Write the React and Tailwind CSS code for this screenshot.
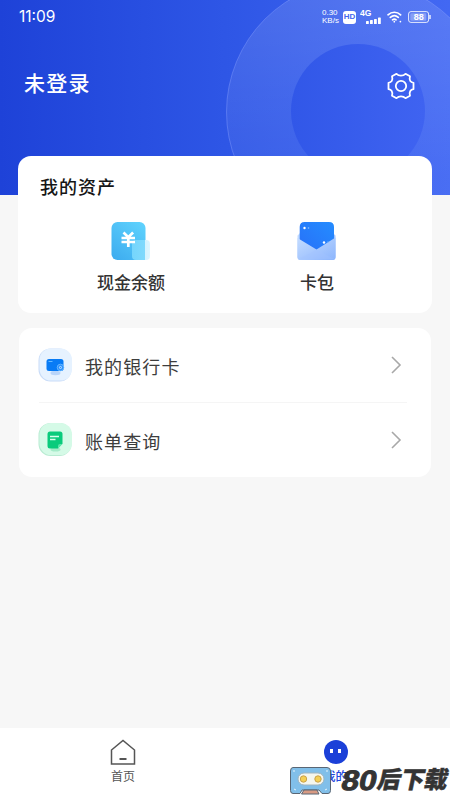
import React from "react";

const SANS = "font-['Noto_Sans_CJK_SC',sans-serif]";

function StatusBar() {
    return (
        <div className="flex h-[34px] items-center justify-between pl-[19px] pr-[19px] text-white">
            <span className="font-['Inter',sans-serif] text-[15.500px] leading-none">11:09</span>

            <div className="flex items-center font-['Liberation_Sans',sans-serif]">
                {/* Network speed */}
                <div className="mr-[4px] w-[17px] text-[8px] leading-[8px]">
                    <div>0.30</div>
                    <div>KB/s</div>
                </div>
                <div className="mr-[4px] flex h-[13px] w-[13px] items-center justify-center rounded-[3px] bg-white text-[8px] font-bold leading-none text-[#4468ee]">
                    HD
                </div>

                {/* 4G + signal */}
                <svg className="mr-[6px] h-[16px] w-[21px]" viewBox="0 0 21 16" fill="#fff">
                    <text x="0" y="7" fontSize="8.5" fontWeight="700">4G</text>
                    <rect x="6" y="12" width="2.8" height="3" rx="0.6" />
                    <rect x="10" y="11" width="2.8" height="4" rx="0.6" />
                    <rect x="14" y="10" width="2.8" height="5" rx="0.6" />
                    <rect x="18" y="8.5" width="2.8" height="6.5" rx="0.6" />
                </svg>

                {/* Wifi */}
                <svg className="mr-[6px] h-[14px] w-[15px]" viewBox="0 0 15 14" fill="none" stroke="#fff" strokeWidth="1.7" strokeLinecap="round">
                    <path d="M1 4.8C4.8 1.4 10 1.4 13.6 4.8" />
                    <path d="M3.3 7.4C5.8 5.2 8.9 5.2 11.3 7.4" />
                    <path d="M5.5 9.8C6.8 8.8 7.9 8.8 9.1 9.8" />
                    <path d="M7.3 11.7h.01M13.4 11.6h.01" />
                </svg>

                {/* Battery */}
                <svg className="h-[12px] w-[23px]" viewBox="0 0 23 12">
                    <rect x="0.6" y="0.6" width="20" height="10.8" rx="2.4" fill="none" stroke="#fff" strokeOpacity="0.85" />
                    <rect x="2.3" y="2.2" width="16" height="7.6" rx="1.2" fill="#fff" fillOpacity="0.3" />
                    <path d="M22 4v4" stroke="#fff" strokeWidth="1.3" />
                    <text x="10.7" y="9.2" fontSize="9" fontWeight="700" fill="#fff" textAnchor="middle">88</text>
                </svg>
            </div>
        </div>
    );
}

function HeaderCircles() {
    return (
        <svg className="absolute inset-0 h-full w-full" viewBox="0 0 450 195" fill="none">
            <defs>
                <linearGradient id="ring" x1="0" y1="0" x2="0" y2="1">
                    <stop offset="0" stopColor="#fff" stopOpacity="0.13" />
                    <stop offset="0.75" stopColor="#fff" stopOpacity="0.04" />
                </linearGradient>
                <linearGradient id="core" x1="0" y1="0" x2="1" y2="0">
                    <stop offset="0" stopColor="#3157e8" />
                    <stop offset="1" stopColor="#3f63f1" />
                </linearGradient>
            </defs>
            <circle cx="358" cy="112" r="131.5" fill="url(#ring)" stroke="#8ba2ff" strokeOpacity="0.4" />
            <circle cx="358" cy="111" r="67" fill="url(#core)" />
        </svg>
    );
}

function GearIcon() {
    return (
        <svg className="h-[28px] w-[28px]" viewBox="0 0 28 28" fill="none" stroke="#fff" strokeWidth="1.8" strokeLinejoin="round">
            <path d="M9.500 1.800C11 3.300 12.400 3.600 14 3.600S17 3.300 18.500 1.800L23 4.300C22.300 6.500 22.500 7.700 23.300 9C24 10 25 10.500 26.500 10.800V17.200C25 17.500 24 18 23.300 19C22.500 20.300 22.300 21.500 23 23.700L18.500 26.200C17 24.700 15.600 24.400 14 24.400S11 24.700 9.500 26.200L5 23.700C5.700 21.500 5.500 20.300 4.700 19C4 18 3 17.500 1.500 17.200V10.800C3 10.500 4 10 4.700 9C5.500 7.700 5.700 6.500 5 4.300Z" />
            <circle cx="14" cy="14" r="5.2" />
        </svg>
    );
}

function CashIcon() {
    return (
        <svg className="h-[42px] w-[42px]" viewBox="0 0 42 42">
            <defs>
                <linearGradient id="cash" x1="0.9" y1="0" x2="0.2" y2="1">
                    <stop offset="0" stopColor="#5fd2fd" />
                    <stop offset="1" stopColor="#3faef0" />
                </linearGradient>
                <linearGradient id="cashTab" x1="0" y1="0" x2="1" y2="0">
                    <stop offset="0" stopColor="#75d5fc" />
                    <stop offset="0.74" stopColor="#80dafd" />
                    <stop offset="0.75" stopColor="#d6f4ff" />
                    <stop offset="1" stopColor="#def6ff" />
                </linearGradient>
            </defs>
            <rect x="1.5" y="2" width="34" height="38" rx="6" fill="url(#cash)" />
            <rect x="22" y="20" width="18" height="20" rx="4" fill="url(#cashTab)" />
            <path d="M13.500 12.500l4.800 4.700 4.800-4.700M11.500 18h13.500M11.500 22h13.500M18.300 17.500v9.600" fill="none" stroke="#fff" strokeWidth="2.700" />
        </svg>
    );
}

function WalletIcon() {
    return (
        <svg className="h-[42px] w-[42px]" viewBox="0 0 42 42">
            <defs>
                <linearGradient id="letter" x1="1" y1="0" x2="0" y2="1">
                    <stop offset="0" stopColor="#248cff" />
                    <stop offset="1" stopColor="#2870f8" />
                </linearGradient>
                <linearGradient id="pocket" x1="0" y1="0" x2="1" y2="1">
                    <stop offset="0" stopColor="#c4dcff" />
                    <stop offset="1" stopColor="#8cb5fd" />
                </linearGradient>
            </defs>
            <path d="M1.500 15.500L5 12v20H36V12l3.500 3.500V37q0 3-3 3H4.500q-3 0-3-3Z" fill="url(#pocket)" />
            <path d="M3.700 7q0-5 5-5H33q5 0 5 5V22L20.500 32L3.700 23Z" fill="url(#letter)" />
            <path d="M1.500 18L20.500 29.500L39.500 17.500V37q0 3-3 3H4.500q-3 0-3-3Z" fill="url(#pocket)" />
            <path d="M3 39L20.500 29.500L38 39" fill="#a2c4ff" fillOpacity="0.35" />
            <circle cx="8.500" cy="8" r="1.200" fill="#fff" />
            <circle cx="12.500" cy="8" r="0.800" fill="#8bc4ff" />
            <circle cx="28" cy="22.500" r="1.200" fill="#fff" />
            <circle cx="32" cy="22" r="0.700" fill="#75b4ff" />
        </svg>
    );
}

function BankIcon() {
    return (
        <svg className="h-[36px] w-[36px]" viewBox="0 0 36 36">
            <rect x="0.500" y="1.500" width="33" height="33" rx="12" fill="#c9dcf8" />
            <rect x="1.500" y="1.500" width="32.500" height="32" rx="11.500" fill="#e6f2ff" />
            <ellipse cx="17.500" cy="26" rx="5" ry="2.200" fill="#b9d5fa" />
            <rect x="8.500" y="12" width="17" height="12" rx="2.500" fill="#087bf5" />
            <path d="M10.500 14.500h4" stroke="#65b9ff" strokeWidth="1" />
            <circle cx="22.500" cy="20.500" r="3.300" fill="#2990ff" stroke="#75bfff" strokeWidth="0.800" />
            <circle cx="22.500" cy="20.500" r="1.100" fill="none" stroke="#d8efff" strokeWidth="0.800" />
        </svg>
    );
}

function BillIcon() {
    return (
        <svg className="h-[36px] w-[36px]" viewBox="0 0 36 36">
            <rect x="0.500" y="1" width="33" height="33" rx="12" fill="#b8ebd2" />
            <rect x="1.500" y="1" width="32.500" height="32" rx="11.500" fill="#d5fae7" />
            <ellipse cx="17.500" cy="27.500" rx="5" ry="2" fill="#a5ebc9" />
            <path d="M12 9.500H22q2.500 0 2.500 2.500V21.500L20 26.500H12Q9.500 26.500 9.500 24V12Q9.500 9.500 12 9.500Z" fill="#0acb7c" />
            <path d="M24.500 22L20 26.500V24Q20 22 22 22Z" fill="#5fe5ab" />
            <path d="M12 14.500H21M12 17.500H17.500" stroke="#d7ffeb" strokeWidth="1.300" />
        </svg>
    );
}

function MenuRow({ icon, label }) {
    return (
        <div className="flex h-[74px] items-center pl-[19px] pr-[29px]">
            {icon}
            <span className="ml-[11px] flex-1 pt-[2px] text-[18px] leading-none tracking-[1.100px] text-[#3d3d3d]">{label}</span>
            <svg className="h-[18px] w-[12px]" viewBox="0 0 12 18" fill="none" stroke="#a8a8a8" strokeWidth="1.600">
                <path d="M2 1L10 9L2 17" />
            </svg>
        </div>
    );
}

function Watermark() {
    return (
        <div className="absolute bottom-[5px] left-[289px] flex h-[30px] w-[161px] items-center">
            <svg className="h-[30px] w-[43px] shrink-0" viewBox="0 0 43 30" stroke="#596674" strokeWidth="1">
                <path d="M4 2.500H38Q41.500 2.500 41.500 6V25.500Q41.500 28.500 39 28.500H33L30 25H13L11 28.500H4Q1.500 28.500 1.500 25.500V6Q1.500 2.500 4 2.500Z" fill="#81bfe9" />
                <path d="M15 25H28L30 29H12.500Z" fill="#d89a83" />
                <rect x="9" y="8" width="26" height="12" rx="6" fill="#f5f6ee" stroke="#9fb4bf" />
                <circle cx="14.500" cy="14" r="3.200" fill="#f4cf55" stroke="#c9a24a" />
                <circle cx="29" cy="14" r="3.200" fill="#f4cf55" stroke="#c9a24a" />
                <path d="M4 6h2M37 6h2M5 24l2 1M36 25l2-1" stroke="#e6f5fc" />
            </svg>
            <svg className="h-[30px] w-[118px] overflow-visible" viewBox="0 0 118 30" fill="#343434" stroke="#343434">
                <g transform="translate(7 24.500) skewX(-12)">
                    <text x="1" y="0" textLength="35" lengthAdjust="spacingAndGlyphs" className="font-['Liberation_Sans',sans-serif]" fontSize="28" fontWeight="700" strokeWidth="0.900">80</text>
                    <text x="37" y="-1.500" textLength="70" lengthAdjust="spacingAndGlyphs" fontSize="23.500" fontWeight="900" strokeWidth="0.500">后下载</text>
                </g>
            </svg>
        </div>
    );
}

export default function App() {
    return (
        <div className={`relative flex h-[800px] w-[450px] flex-col overflow-hidden bg-[#f7f7f7] ${SANS}`}>
            {/* Header */}
            <header className="relative h-[195px] shrink-0 bg-linear-to-r from-[#1e42d8] via-[#2e56e6] to-[#4268f3]">
                <HeaderCircles />
                <div className="relative">
                    <StatusBar />
                    <div className="flex h-[104px] items-center justify-between pl-[24px] pr-[35px]">
                        <h1 className="-mt-[7px] text-[21px] font-medium leading-none tracking-[1.300px] text-white">未登录</h1>
                        <GearIcon />
                    </div>
                </div>
            </header>

            {/* Assets */}
            <section className="relative mx-[18px] -mt-[39px] h-[157px] shrink-0 rounded-[13px] bg-white pt-[21px]">
                <h2 className="pl-[22px] text-[18px] font-medium leading-[18px] tracking-[1px] text-[#161616]">我的资产</h2>
                <div className="mt-[25px] flex pl-[19px]">
                    <div className="flex w-[188px] flex-col items-center">
                        <CashIcon />
                        <span className="mt-[11px] text-[17px] font-medium leading-[17px] text-[#333]">现金余额</span>
                    </div>
                    <div className="flex w-[184px] flex-col items-center">
                        <WalletIcon />
                        <span className="mt-[11px] text-[17px] font-medium leading-[17px] text-[#333]">卡包</span>
                    </div>
                </div>
            </section>

            {/* Menu */}
            <section className="mx-[19px] mt-[15px] h-[149px] shrink-0 rounded-[13px] bg-white">
                <MenuRow icon={<BankIcon />} label="我的银行卡" />
                <div className="ml-[20px] mr-[24px] h-px bg-[#f5f5f5]" />
                <MenuRow icon={<BillIcon />} label="账单查询" />
            </section>

            {/* Bottom tabs */}
            <nav className="mt-auto flex h-[72px] shrink-0 bg-white pl-[17px] pr-[8px]">
                <div className="flex w-[212px] flex-col items-center pt-[11px]">
                    <svg className="h-[27px] w-[26px]" viewBox="0 0 26 27" fill="none" stroke="#555" strokeWidth="1.500">
                        <path d="M1.500 11L13 1.500L24.500 11V25H1.500Z" />
                        <path d="M9.500 20H16.500" strokeWidth="2" />
                    </svg>
                    <span className="mt-[4px] text-[12px] leading-[12px] text-[#555]">首页</span>
                </div>
                <div className="flex w-[213px] flex-col items-center pt-[12px]">
                    <div className="flex h-[24px] w-[24px] justify-center gap-[5px] rounded-full bg-[#1b40d8] pt-[9px]">
                        <i className="h-[4px] w-[3px] bg-white" />
                        <i className="h-[4px] w-[3px] bg-white" />
                    </div>
                    <span className="mt-[6px] text-[12px] font-medium leading-[12px] text-[#2447dc]">我的</span>
                </div>
            </nav>

            <Watermark />
        </div>
    );
}
